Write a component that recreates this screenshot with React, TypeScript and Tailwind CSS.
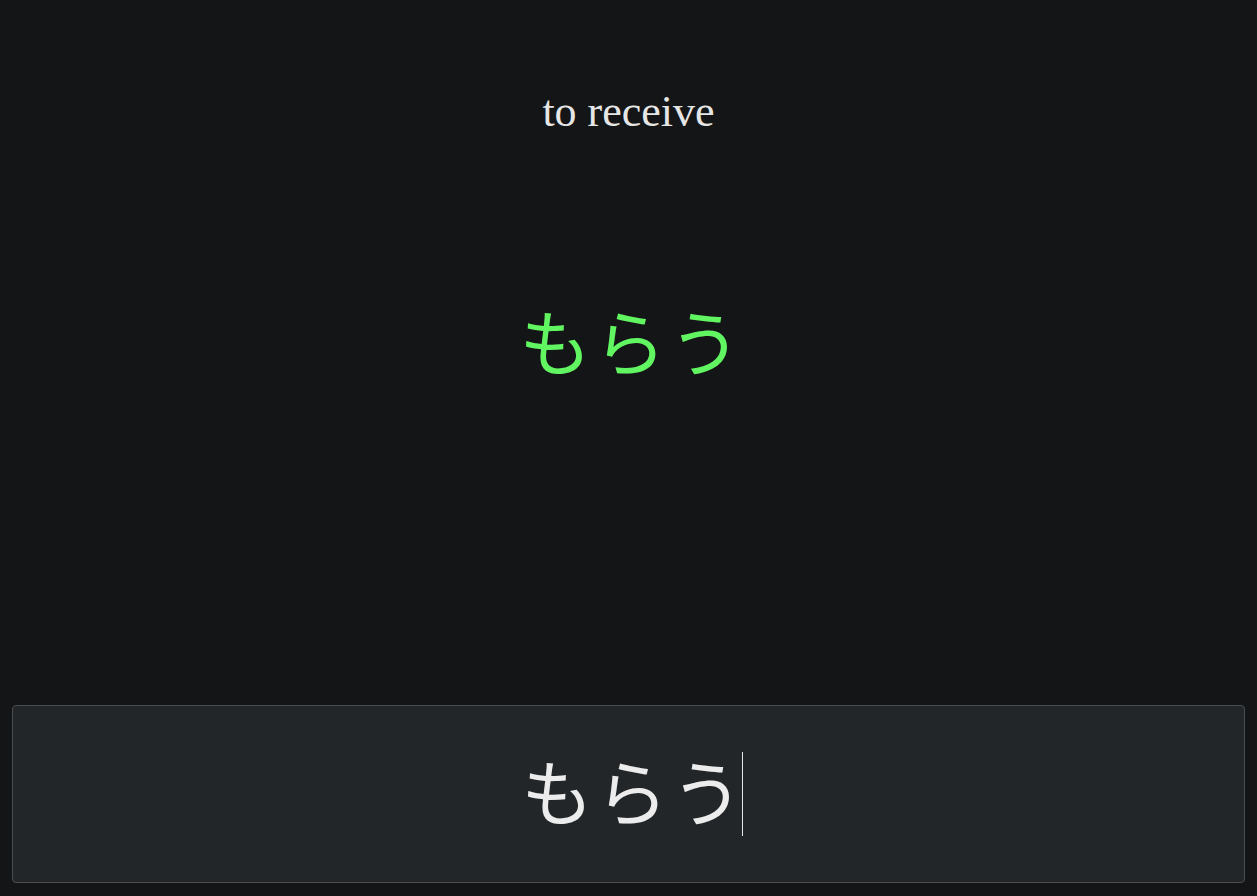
import React from 'react';

export default function App() {
  const word = 'to receive';
  const kana = 'もらう';

  return (
    <div className="h-[896px] w-full bg-[#141517] flex flex-col">
      <div className="flex-1 flex flex-col items-center">
        <div
          className="mt-[86px] text-[44px] leading-[52px] text-[#e6e6e6]"
          style={{ fontFamily: '"Liberation Serif", serif' }}
        >
          {word}
        </div>
        <div
          className="mt-[151px] pl-[6px] text-[72px] leading-[100px] text-[#62f562] tracking-[0.04em]"
          style={{ fontFamily: '"Noto Sans CJK JP", sans-serif' }}
        >
          {kana}
        </div>
      </div>
      <div className="px-3 pb-[13px]">
        <div className="h-[178px] rounded border border-[#4a4e51] bg-[#222628] flex items-center justify-center">
          <div
            className="relative pl-[10px] -mt-[10px] text-[72px] leading-[100px] text-[#ececec] tracking-[0.04em]"
            style={{ fontFamily: '"Noto Sans CJK JP", sans-serif' }}
          >
            {kana}
            <span className="absolute right-[3px] top-[13px] h-[84px] w-px bg-[#e6e6e6]" />
          </div>
        </div>
      </div>
    </div>
  );
}
